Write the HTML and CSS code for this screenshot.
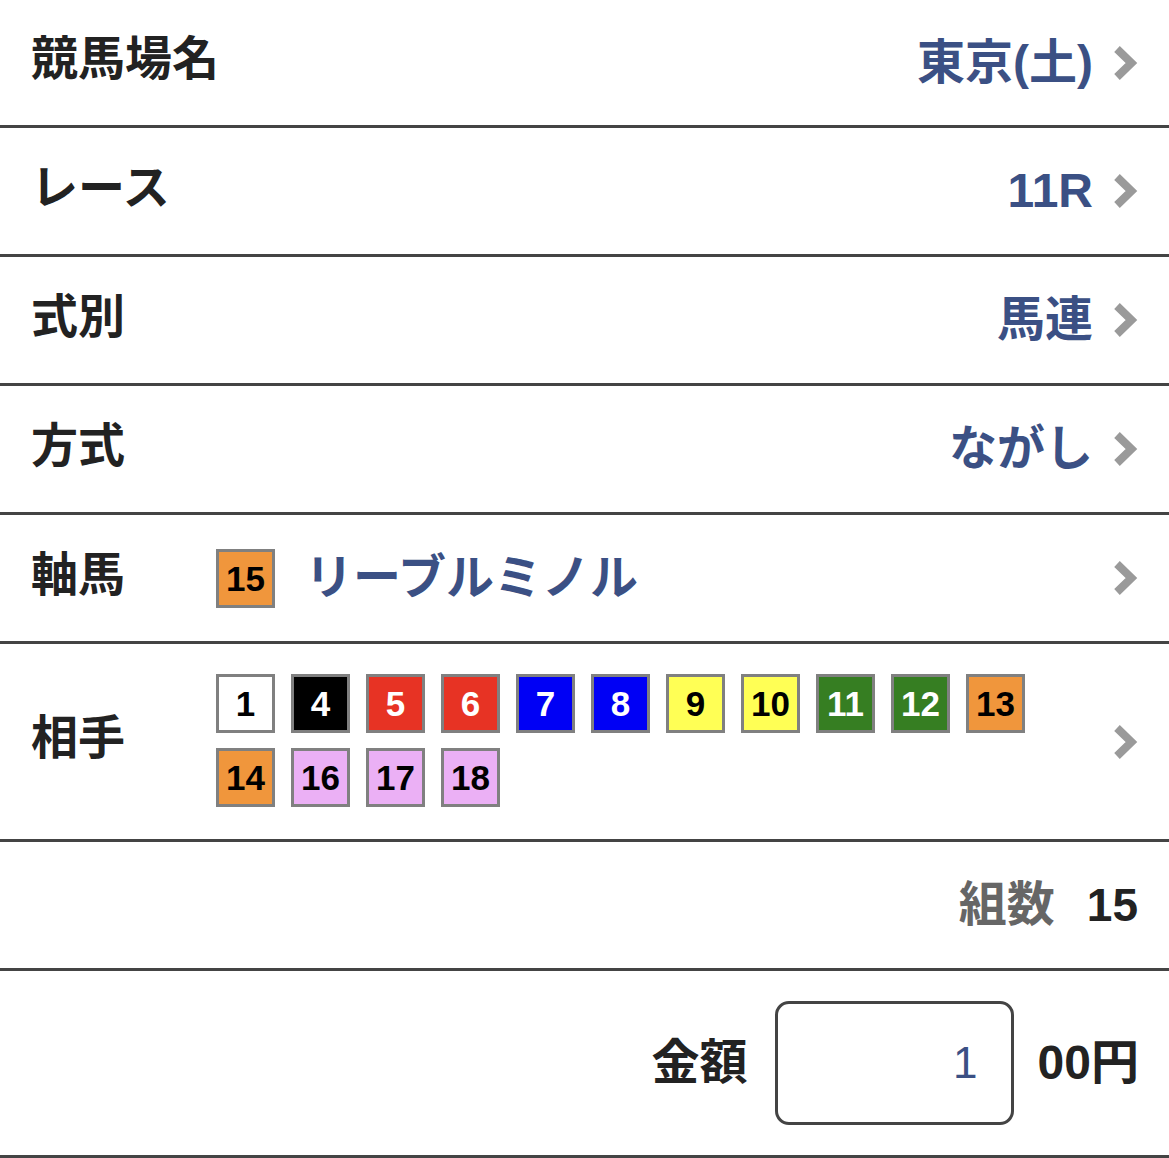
FILE: index.html
```html
<!DOCTYPE html>
<html lang="ja">
<head>
<meta charset="utf-8">
<link rel="stylesheet" href="styles.css">
</head>
<body>
<div class="list">
  <div class="row">
    <div class="label">競馬場名</div>
    <div class="value">東京(土)</div>
    <svg class="chev" viewBox="0 0 25 36"><polyline points="4,4 18.5,18 4,32"/></svg>
  </div>
  <div class="row">
    <div class="label">レース</div>
    <div class="value">11R</div>
    <svg class="chev" viewBox="0 0 25 36"><polyline points="4,4 18.5,18 4,32"/></svg>
  </div>
  <div class="row">
    <div class="label">式別</div>
    <div class="value">馬連</div>
    <svg class="chev" viewBox="0 0 25 36"><polyline points="4,4 18.5,18 4,32"/></svg>
  </div>
  <div class="row">
    <div class="label">方式</div>
    <div class="value">ながし</div>
    <svg class="chev" viewBox="0 0 25 36"><polyline points="4,4 18.5,18 4,32"/></svg>
  </div>
  <div class="row">
    <div class="label">軸馬</div>
    <div class="horse">
      <span class="badge c-orange">15</span>
      <span class="horse-name">リーブルミノル</span>
    </div>
    <svg class="chev" viewBox="0 0 25 36"><polyline points="4,4 18.5,18 4,32"/></svg>
  </div>
  <div class="row row-tall">
    <div class="label">相手</div>
    <div class="badges">
      <span class="badge c-white">1</span>
      <span class="badge c-black">4</span>
      <span class="badge c-red">5</span>
      <span class="badge c-red">6</span>
      <span class="badge c-blue">7</span>
      <span class="badge c-blue">8</span>
      <span class="badge c-yellow">9</span>
      <span class="badge c-yellow">10</span>
      <span class="badge c-green">11</span>
      <span class="badge c-green">12</span>
      <span class="badge c-orange">13</span>
      <span class="badge c-orange">14</span>
      <span class="badge c-pink">16</span>
      <span class="badge c-pink">17</span>
      <span class="badge c-pink">18</span>
    </div>
    <svg class="chev" viewBox="0 0 25 36"><polyline points="4,4 18.5,18 4,32"/></svg>
  </div>
  <div class="row row-count">
    <span class="count-label">組数</span>
    <span class="count-num">15</span>
  </div>
  <div class="row row-amount">
    <span class="amount-label">金額</span>
    <div class="amount-box">1</div>
    <span class="amount-unit">00円</span>
  </div>
</div>
</body>
</html>
```

FILE: styles.css
```css
html, body {
  margin: 0;
  padding: 0;
  background: #ffffff;
}
body {
  font-family: "Liberation Sans", "Noto Sans CJK JP", sans-serif;
  color: #222222;
}
.list {
  display: flex;
  flex-direction: column;
}
.row {
  display: flex;
  align-items: center;
  height: 126px;
  border-bottom: 3px solid #444444;
  padding: 0 31px 0 31px;
}
.row:first-child {
  height: 125px;
}
.label {
  width: 185px;
  flex: none;
  font-size: 47px;
  font-weight: bold;
  color: #222222;
  line-height: 1;
  white-space: nowrap;
  margin-top: -8px;
}
.value {
  flex: 1;
  text-align: right;
  font-size: 48px;
  font-weight: bold;
  color: #3b5084;
  line-height: 1;
  white-space: nowrap;
}
.chev {
  width: 25px;
  height: 36px;
  margin-left: 20px;
  flex: none;
}
.chev polyline {
  fill: none;
  stroke: #9a9a9a;
  stroke-width: 8;
  stroke-linejoin: miter;
  stroke-linecap: butt;
}
.horse {
  flex: 1;
  display: flex;
  align-items: center;
}
.horse-name {
  margin-left: 30px;
  font-size: 48px;
  font-weight: bold;
  color: #3b5084;
  line-height: 1;
  white-space: nowrap;
}
.badge {
  box-sizing: border-box;
  width: 59px;
  height: 59px;
  border: 3px solid #808080;
  display: flex;
  align-items: center;
  justify-content: center;
  font-size: 35px;
  font-weight: bold;
  font-family: "Liberation Sans", sans-serif;
  line-height: 1;
  flex: none;
}
.c-white { background: #ffffff; color: #000000; }
.c-black { background: #000000; color: #ffffff; }
.c-red { background: #e73324; color: #ffffff; }
.c-blue { background: #0000f5; color: #ffffff; }
.c-yellow { background: #ffff55; color: #000000; }
.c-green { background: #367e22; color: #ffffff; }
.c-orange { background: #f0963c; color: #000000; }
.c-pink { background: #ebb0f5; color: #000000; }
.row-tall {
  height: 195px;
}
.badges {
  flex: 1;
  display: flex;
  flex-wrap: wrap;
  gap: 15px 16px;
  align-content: center;
  margin-top: -2px;
}
.row-count {
  justify-content: flex-end;
}
.count-label {
  font-size: 48px;
  font-weight: bold;
  color: #666666;
  line-height: 1;
}
.count-num {
  margin-left: 32px;
  font-size: 46px;
  font-weight: bold;
  color: #222222;
  line-height: 1;
}
.row-amount {
  height: 184px;
  justify-content: flex-end;
  padding-right: 30px;
}
.amount-label {
  font-size: 48px;
  font-weight: bold;
  color: #222222;
  line-height: 1;
}
.amount-box {
  box-sizing: border-box;
  width: 239px;
  height: 124px;
  margin-left: 27px;
  border: 3px solid #444444;
  border-radius: 14px;
  display: flex;
  align-items: center;
  justify-content: flex-end;
  padding-right: 33px;
  font-size: 44px;
  color: #3b5084;
}
.amount-unit {
  margin-left: 24px;
  font-size: 48px;
  font-weight: bold;
  color: #222222;
  line-height: 1;
}
```
